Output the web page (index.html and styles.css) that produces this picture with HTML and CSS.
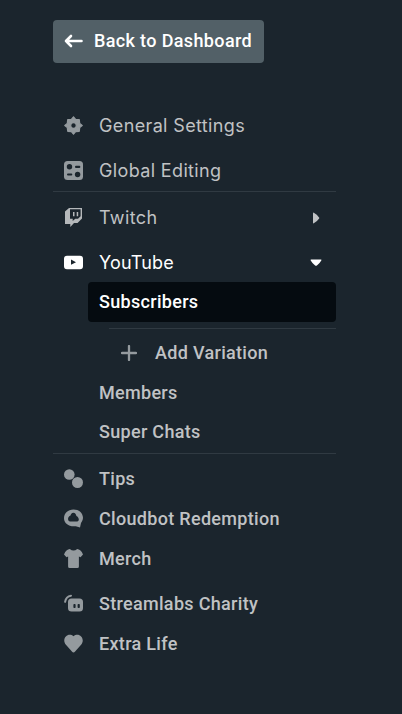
FILE: index.html
```html
<!DOCTYPE html>
<html lang="en">
<head>
<meta charset="utf-8">
<title>Alert settings</title>
<link rel="stylesheet" href="styles.css">
</head>
<body>
<nav class="sidebar">
  <button class="back"><svg class="arrow" viewBox="0 0 20 16"><path d="M7 3 2 8l5 5M2 8h15.500"/></svg><span>Back to Dashboard</span></button>
  <a class="row tall inter"><svg class="icon" viewBox="0 0 19 19"><path class="gear" fill-rule="evenodd" d="M9.500 .8 11.600 3.300 15.300 3.700 15.700 7.400 18.200 9.500 15.700 11.600 15.300 15.300 11.600 15.700 9.500 18.200 7.400 15.700 3.700 15.300 3.300 11.600 .8 9.500 3.300 7.400 3.700 3.700 7.400 3.300ZM9.500 6.700a2.800 2.800 0 1 0 0 5.600 2.800 2.800 0 0 0 0-5.600Z"/></svg><span>General Settings</span></a>
  <a class="row global inter"><svg class="icon" viewBox="0 0 19 19"><rect width="19" height="19" rx="3.5"/><g class="hole"><circle cx="5.500" cy="5.800" r="2.700"/><rect x="11" y="4.700" width="5.300" height="2.200" rx="1"/><rect x="3" y="12.400" width="5.300" height="2.200" rx="1"/><circle cx="13.600" cy="13.500" r="2.700"/></g></svg><span>Global Editing</span></a>
  <hr>
  <a class="row twitch inter"><svg class="icon" viewBox="0 0 19 19"><path fill-rule="evenodd" d="M5 0h13v10.500l-4.500 4.500H10l-3.700 4v-3H1V3.500ZM6 1.300v9.500h2.700v2.300l2.600-2.300h2.700l2.600-2.600V1.300ZM9 4h1.500v4.200H9Zm3.700 0h1.500v4.200h-1.500Z"/></svg><span>Twitch</span><svg class="caret" viewBox="0 0 12 12"><path d="M3 1.200q0-.8.8-.5Q7 2.300 9.100 5.400q.4.600 0 1.200Q7 9.700 3.800 11.300q-.8.300-.8-.5Z"/></svg></a>
  <a class="row active inter"><svg class="icon" viewBox="0 0 19 19"><path fill-rule="evenodd" d="M3 2.700h13a3 3 0 0 1 3 3v7.500a3 3 0 0 1-3 3H3a3 3 0 0 1-3-3V5.700a3 3 0 0 1 3-3ZM7 6.500v5.300l5-2.600Z"/></svg><span>YouTube</span><svg class="caret" viewBox="0 0 12 12"><path d="M1.200 2.500h9.600q1.200 0 .5.900Q9.500 6.500 6.900 8.500q-.9.600-1.800 0Q2.500 6.500 .7 3.400.1 2.500 1.200 2.500Z"/></svg></a>
  <a class="sub selected"><span>Subscribers</span></a>
  <hr class="inset">
  <a class="add"><svg class="plus" viewBox="0 0 16 16"><path d="M8 1v14M1 8h14"/></svg><span>Add Variation</span></a>
  <a class="sub"><span>Members</span></a>
  <a class="sub"><span>Super Chats</span></a>
  <hr class="after">
  <a class="row"><svg class="icon" viewBox="0 0 19 19"><circle cx="5.300" cy="5.500" r="5.300"/><circle cx="13.500" cy="13.500" r="5.500"/></svg><span>Tips</span></a>
  <a class="row"><svg class="icon" viewBox="0 0 19 19"><path fill-rule="evenodd" d="M9.500 .4c5.300 0 9.500 3.500 9.500 8.400 0 2.100-1.200 3.900-2 5.200L16 18.500 11.800 17.200C5.500 18.200 0 14.500 0 9.200 0 4.100 4 .4 9.500.4ZM9.400 3.800C7.400 3.800 7 5.300 6.500 6.500 4.600 7.400 3.900 8.800 4.100 10.500c.2 1.500 1.300 2.100 2.700 2.100h5.600c1.400 0 2.400-.8 2.400-2.200 0-1.600-1-2.800-2.400-3.500-.4-1.700-1.200-3.100-3-3.100Z"/></svg><span>Cloudbot Redemption</span></a>
  <a class="row merch"><svg class="icon" viewBox="0 0 19 19"><path d="M5.800 0q3.700 3 7.400 0 1.800.2 3 1.200Q18 2.700 19 5.500L16.500 8.200 14.900 7.600V17.500Q14.900 19 13.400 19H5.600Q4.100 19 4.100 17.500V7.600L2.500 8.200 0 5.500Q1 2.700 2.800 1.200 4 .2 5.800 0Z"/></svg><span>Merch</span></a>
  <a class="row"><svg class="icon" viewBox="0 0 19 19"><path class="handle" d="M1.100 7.800Q2 2.400 7 1.700"/><rect x="4" y="4.500" width="15" height="13" rx="3.500"/><g class="hole"><rect x="9.400" y="10" width="2.200" height="4" rx=".8"/><rect x="13.600" y="10" width="2.200" height="4" rx=".8"/></g></svg><span>Streamlabs Charity</span></a>
  <a class="row"><svg class="icon" viewBox="0 0 19 19"><path d="M9.500 18.500Q8.700 18.500 7.900 17.500L1.900 10.800C-3 5 4-2.500 9.500 2.300 15-2.500 22 5 17.100 10.800L11.100 17.500Q10.300 18.500 9.500 18.500Z"/></svg><span>Extra Life</span></a>
</nav>
</body>
</html>
```

FILE: styles.css
```css
* { box-sizing: border-box; }

body {
  margin: 0;
  height: 714px;
  overflow: hidden;
  background: #1b252d;
  color: #c0c2c4;
  font: 500 18px/24px Roboto, sans-serif;
  letter-spacing: .31px;
}

.sidebar {
  width: 283px;
  margin: 20px 0 0 53px;
  display: flex;
  flex-direction: column;
}

.back {
  width: 211px;
  height: 43px;
  margin-bottom: 40px;
  padding: 0 0 1px 11px;
  display: flex;
  align-items: center;
  gap: 10px;
  border: 0;
  border-radius: 4px;
  background: #526067;
  color: #fff;
  font: inherit;
  letter-spacing: .36px;
}

span { white-space: nowrap; }

.arrow { width: 20px; height: 16px; }
.arrow path, .plus path {
  fill: none;
  stroke: #fff;
  stroke-width: 2.6;
  stroke-linecap: round;
  stroke-linejoin: round;
}

.row {
  height: 40px;
  padding: 0 14px 0 11px;
  display: flex;
  align-items: center;
}
.tall { height: 45px; }
.global { height: 43px; padding-top: 2px; }
.twitch { height: 50px; padding-top: 1px; }
.merch { margin-bottom: 5px; }
.inter { font-family: Inter, sans-serif; font-weight: 400; letter-spacing: .36px; }
.active { padding-top: 1px; color: #fff; letter-spacing: .15px; }

.icon {
  width: 19px;
  height: 19px;
  margin: 0 16px 1px 0;
  flex: none;
  fill: #949a9e;
}
.gear { stroke: #949a9e; stroke-width: 1.2; stroke-linejoin: round; }
.twitch .icon { fill: #b5b8ba; }
.active .icon { fill: #fff; }
.icon .hole { fill: #1b252d; }
.icon .handle { fill: none; stroke: #949a9e; stroke-width: 2; stroke-linecap: round; }

.caret { width: 12px; height: 12px; margin-left: auto; fill: currentColor; }

.sub {
  height: 39px;
  margin-left: 35px;
  padding-left: 11px;
  display: flex;
  align-items: center;
}
.selected { height: 40px; border-radius: 4px; background: #050b10; color: #fff; }

hr { width: 100%; height: 1px; margin: 0; border: 0; background: #303a42; }
.inset { width: 227px; margin: 6px 0 4px 56px; }
.after { margin: 2px 0 5px; }

.add {
  height: 40px;
  padding-left: 68px;
  display: flex;
  align-items: center;
  gap: 18px;
}
.plus { width: 16px; height: 16px; }
.plus path { stroke: #949a9e; stroke-width: 2.3; }
```
